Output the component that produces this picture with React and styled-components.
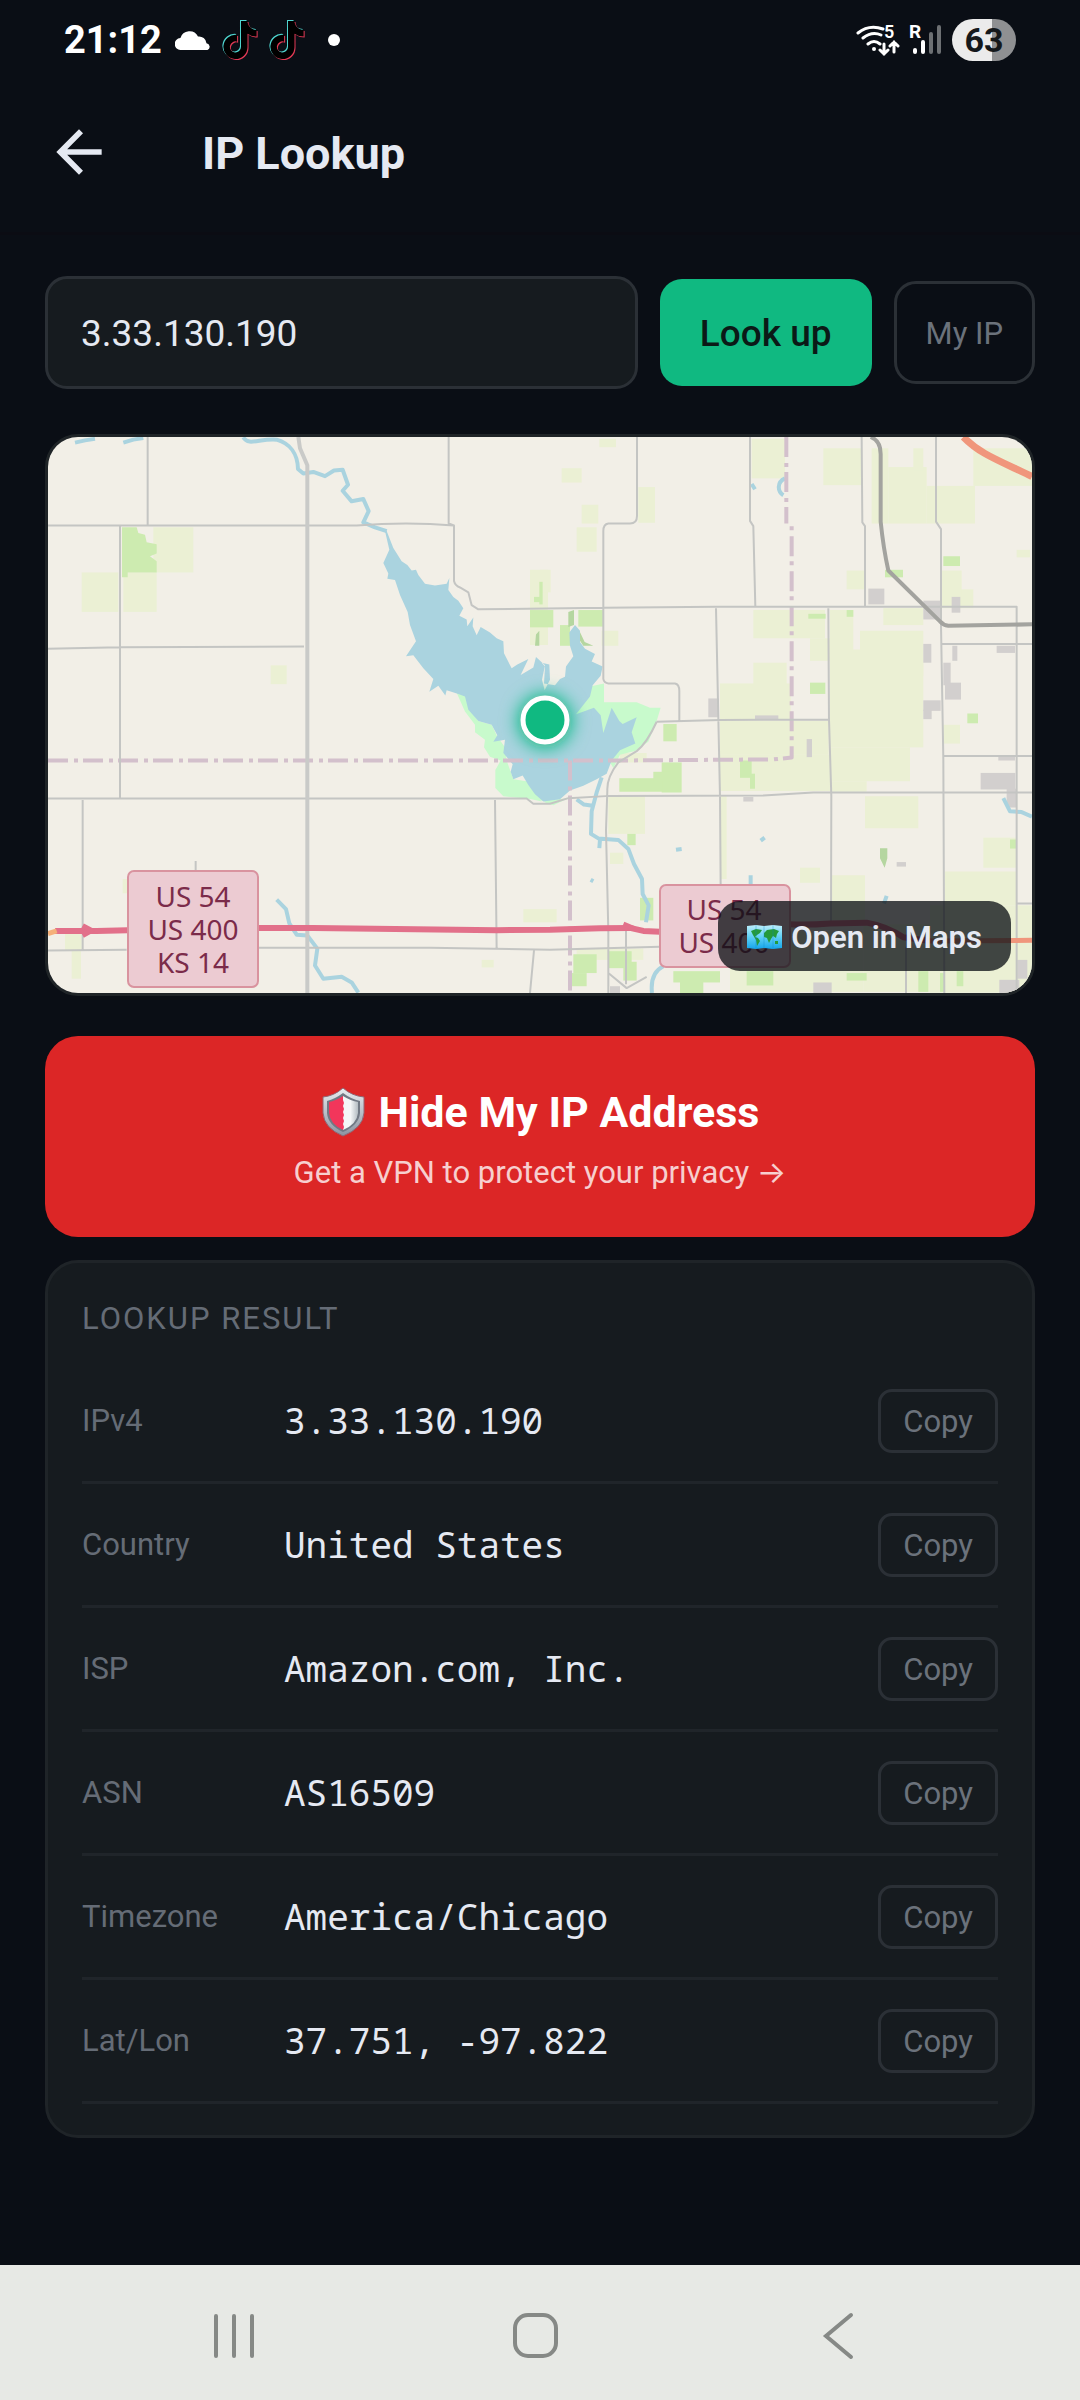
import React, { useState } from 'react';
import styled, { createGlobalStyle } from 'styled-components';
import { FaTiktok } from 'react-icons/fa6';


/* START: CSS in JS */

const GlobalStyle = createGlobalStyle`
    * {
        box-sizing: border-box;
    }
    body {
        margin: 0;
        background: #0a0e15;
        color: #e5e9f2;
        font-family: Roboto, 'Liberation Sans', sans-serif;
    }
    button, input {
        font-family: inherit;
    }
    button {
        cursor: pointer;
    }
`
const Page = styled.div`
    display: flex;
    flex-direction: column;
    min-height: 100vh;
`
const StatusBar = styled.div`
    display: flex;
    align-items: center;
    justify-content: space-between;
    height: 72px;
    padding: 8px 64px 0;
    color: white;
`
const StatusGroup = styled.div`
    display: flex;
    align-items: center;
    gap: ${props => props.$gap}px;
`
const Clock = styled.span`
    font-size: 38px;
    font-weight: 700;
    margin-right: 2px;
`
const Dot = styled.span`
    width: 12px;
    height: 12px;
    margin-left: 12px;
    border-radius: 50%;
    background: white;
`
const Battery = styled.span`
    width: 64px;
    height: 42px;
    margin-left: 4px;
    border-radius: 21px;
    background: linear-gradient(to right, #ebebeb ${props => props.$level}%, #8f9092 ${props => props.$level}%);
    color: #14181b;
    font-size: 34px;
    font-weight: 700;
    line-height: 42px;
    text-align: center;
`
const Header = styled.header`
    display: flex;
    align-items: center;
    gap: 89px;
    height: 163px;
    padding: 0 45px;
    border-bottom: 3px solid #0b0c13;
    h1 {
        margin: 0;
        padding-top: 2px;
        font-size: 45px;
        font-weight: 700;
    }
`
const BackButton = styled.button`
    display: flex;
    padding: 0;
    border: 0;
    background: transparent;
    color: inherit;
`
const Main = styled.main`
    display: flex;
    flex-direction: column;
    flex: 1;
    padding: 41px 45px;
`
const SearchForm = styled.form`
    display: flex;
    align-items: center;
    gap: 22px;
    margin-bottom: 45px;
`
const SearchInput = styled.input`
    flex: 1;
    min-width: 0;
    height: 113px;
    padding: 2px 33px 0;
    border: 3px solid #2b3036;
    border-radius: 22px;
    background: #161b1f;
    color: #e5e9f2;
    font-size: 37px;
    outline: none;
`
const LookupButton = styled.button`
    height: 107px;
    padding: 2px 40px 0;
    border: 0;
    border-radius: 22px;
    background: #10b981;
    color: #0b1a17;
    font-size: 37px;
    font-weight: 500;
`
const OutlineButton = styled.button`
    height: ${props => props.$small ? 64 : 103}px;
    padding: 2px ${props => props.$small ? 22 : 29}px 0;
    border: 3px solid #2b3036;
    border-radius: ${props => props.$small ? 14 : 22}px;
    background: transparent;
    color: #6b727b;
    font-size: 31px;
`
const MapCard = styled.section`
    position: relative;
    margin-bottom: 40px;
    border: 3px solid #1f2427;
    border-radius: 33px;
    overflow: hidden;
    & > svg {
        display: block;
        width: 100%;
        height: auto;
    }
    path.line {
        fill: none;
        vector-effect: non-scaling-stroke;
        stroke-linejoin: round;
    }
    text {
        font-family: 'Noto Sans', sans-serif;
        font-size: 28px;
        text-anchor: middle;
        fill: #7b2b4a;
    }
`
const MapLink = styled.a`
    position: absolute;
    right: 21px;
    bottom: 22px;
    display: flex;
    align-items: center;
    gap: 9px;
    height: 70px;
    padding: 2px 29px 0;
    border-radius: 22px;
    background: rgba(10, 14, 20, 0.76);
    color: #e5e9f2;
    font-size: 31px;
    font-weight: 600;
    text-decoration: none;
`
const Banner = styled.a`
    display: flex;
    flex-direction: column;
    align-items: center;
    justify-content: center;
    gap: 14px;
    min-height: 201px;
    margin-bottom: 23px;
    padding: 6px 40px 0;
    border-radius: 33px;
    background: #dc2626;
    color: white;
    text-decoration: none;
`
const BannerTitle = styled.strong`
    display: flex;
    align-items: center;
    gap: 13px;
    font-size: 43px;
    line-height: 52px;
`
const BannerText = styled.span`
    color: rgba(255, 255, 255, 0.78);
    font-size: 31px;
    line-height: 40px;
`
const Arrow = styled.span`
    font-family: Inter, sans-serif;
`
const ResultCard = styled.section`
    padding: 35px 34px 31px;
    border: 3px solid #1f2428;
    border-radius: 33px;
    background: #161b1f;
    h2 {
        margin: 0 0 20px;
        color: #656c76;
        font-size: 31px;
        font-weight: 400;
        line-height: 42px;
        letter-spacing: 2px;
        text-transform: uppercase;
    }
`
const ResultTable = styled.table`
    width: 100%;
    border-collapse: separate;
    border-spacing: 0;
    th, td {
        height: 124px;
        padding: 0;
        border-bottom: 3px solid #20252a;
        text-align: left;
    }
    th {
        width: 202px;
        color: #656c76;
        font-size: 31px;
        font-weight: 400;
    }
    td {
        font-family: 'Noto Sans Mono', 'DejaVu Sans Mono', monospace;
        font-size: 36px;
    }
    td:last-child {
        font-family: inherit;
        text-align: right;
    }
`
const NavBar = styled.nav`
    display: flex;
    align-items: center;
    justify-content: center;
    gap: 182px;
    height: 135px;
    padding: 7px 9px 0 0;
    background: #e7e9e5;
`
const NavButton = styled.button`
    display: flex;
    justify-content: center;
    width: 120px;
    padding: 0;
    border: 0;
    background: transparent;
    svg {
        fill: none;
        stroke: #868986;
        stroke-width: 4;
        stroke-linecap: round;
    }
`

/* END: CSS in JS */


const rows = [
    { label: 'IPv4', value: '3.33.130.190' },
    { label: 'Country', value: 'United States' },
    { label: 'ISP', value: 'Amazon.com, Inc.' },
    { label: 'ASN', value: 'AS16509' },
    { label: 'Timezone', value: 'America/Chicago' },
    { label: 'Lat/Lon', value: '37.751, -97.822' },
]

// [x, y, width, height] of the land use patches
const fields = [
    [370, 285, 120, 120], [155, 405, 110, 105], [280, 405, 100, 105], [722, 652, 48, 50],
    [105, 1365, 50, 45], [125, 1410, 28, 75], [278, 1220, 20, 38], [1480, 1300, 100, 35],
    [1355, 1435, 36, 20], [1500, 398, 54, 200], [1708, 50, 50, 22], [1595, 128, 60, 38],
    [1825, 178, 50, 95], [1655, 225, 50, 50], [1640, 285, 60, 65], [2165, 50, 100, 105],
    [2380, 75, 115, 98], [2525, 75, 50, 200], [2575, 125, 115, 150], [2650, 75, 30, 60],
    [2690, 175, 145, 100], [2830, 75, 176, 100], [2450, 400, 54, 50], [2170, 505, 215, 75],
    [2170, 645, 100, 60], [2070, 700, 212, 98], [2070, 800, 326, 90], [2070, 890, 330, 96],
    [2340, 580, 60, 60], [2400, 505, 70, 130], [2400, 610, 280, 260], [2490, 560, 190, 120],
    [2560, 500, 120, 45], [2400, 870, 240, 90], [2400, 960, 110, 28], [2505, 1000, 160, 85],
    [2860, 1110, 100, 80], [2745, 1200, 215, 90], [2700, 1290, 306, 232], [2405, 1210, 100, 120],
    [2310, 1190, 60, 40], [1715, 560, 50, 40], [1735, 1000, 110, 100], [1740, 1150, 40, 30],
    [2100, 1360, 400, 160], [2500, 1340, 200, 180], [2740, 810, 50, 50], [2960, 345, 40, 20],
    [2780, 450, 50, 50], [2735, 400, 60, 100], [2070, 1000, 20, 220], [1530, 398, 32, 60],
    [1770, 885, 80, 25], [1640, 1405, 200, 30],
]
const woods = [
    [1500, 505, 70, 46], [1645, 505, 75, 44], [1590, 545, 30, 55], [1512, 470, 24, 14],
    [1900, 808, 40, 46], [1895, 910, 60, 80], [1768, 952, 130, 36], [1870, 935, 50, 25],
    [2130, 905, 35, 46], [2160, 940, 15, 40], [2335, 515, 52, 13], [2340, 698, 46, 30],
    [2740, 362, 50, 26], [2565, 398, 54, 20], [2812, 780, 32, 26], [1792, 1100, 25, 30],
    [1630, 1420, 70, 50], [1620, 1470, 50, 35], [1735, 1412, 70, 45], [1780, 1440, 40, 50],
    [1930, 1465, 140, 30], [1950, 1490, 70, 33], [2150, 1465, 80, 38], [1830, 1270, 40, 60],
    [2450, 505, 20, 18], [2665, 1465, 30, 55], [2780, 1465, 20, 40], [2450, 1470, 60, 20],
    [2940, 1115, 20, 24], [1528, 430, 10, 60], [2730, 1470, 14, 50],
]
const towns = [
    [2515, 448, 48, 42], [2680, 480, 55, 50], [2765, 470, 26, 42], [2680, 595, 24, 50],
    [2767, 600, 15, 40], [2900, 600, 55, 19], [2740, 645, 22, 60], [2745, 698, 48, 45],
    [2680, 745, 52, 28], [2680, 770, 25, 25], [2035, 740, 32, 50], [2330, 848, 16, 48],
    [2852, 938, 104, 44], [2930, 980, 28, 50], [2350, 1495, 55, 28], [2908, 1488, 60, 35],
    [2962, 1435, 30, 50], [2600, 1175, 28, 12], [2140, 1002, 30, 12], [2175, 785, 70, 10],
    [1740, 1505, 30, 18], [2905, 895, 50, 10],
]

const lake = 'M1070 295L1090 340 1115 375 1132 385 1145 400 1158 398 1165 412 1185 435 1215 440 1250 435 1258 420 1255 452 1270 470 1285 480 1300 500 1288 520 1310 530 1312 548 1330 525 1328 548 1340 572 1352 550 1380 565 1400 580 1420 588 1422 620 1445 660 1462 650 1495 635 1472 678 1510 658 1518 630 1545 652 1536 690 1544 718 1560 690 1558 650 1535 645 1545 655 1542 700 1575 705 1590 688 1605 682 1608 655 1630 628 1620 600 1618 565 1635 545 1650 560 1650 590 1665 608 1695 622 1685 642 1718 655 1712 680 1688 705 1680 735 1638 782 1692 765 1712 785 1720 832 1745 765 1768 800 1778 808 1820 790 1805 830 1816 860 1770 878 1745 905 1730 940 1700 955 1660 972 1620 985 1590 1008 1540 1014 1515 995 1495 970 1478 945 1450 955 1442 935 1448 915 1420 885 1425 850 1390 855 1402 838 1385 810 1345 800 1315 770 1305 735 1285 728 1250 718 1246 732 1225 706 1198 722 1210 688 1180 660 1150 625 1128 628 1158 588 1140 545 1133 510 1110 465 1095 425 1072 422 1075 408 1060 380 1078 345 1065 295Z'
const park = 'M1280 725L1305 730 1320 770 1345 800 1385 810 1402 842 1425 870 1430 905 1450 955 1490 960 1545 1016 1505 1008 1420 1000 1396 978 1396 930 1412 905 1380 895 1362 870 1365 850 1335 830 1335 810 1305 775ZM1680 708L1722 700 1722 750 1820 750 1860 765 1892 765 1880 800 1855 855 1815 880 1770 890 1750 925 1700 850 1630 790ZM1530 1012L1570 1024 1615 1005Z'
const rivers = 'M135 60L165 54 195 50M280 60L310 52 340 48M640 46C655 70 690 48 740 52 780 62 803 90 804 130L820 142 850 138 885 149 912 134 938 132 954 172 938 188 965 216 1000 210 1016 242 1000 272 1035 285 1070 295M1715 950L1700 990 1685 1040 1683 1100 1705 1112 1765 1116 1795 1140 1812 1180 1836 1220 1838 1260 1856 1290 1848 1335M1640 1008L1662 1022 1688 1025M1710 1115L1708 1138M1900 1452C1870 1465 1862 1490 1866 1523M740 1275L768 1300 778 1338 800 1368 832 1370 862 1405 855 1450 880 1485 935 1480 965 1495 985 1522M2920 1005L2940 1040 2975 1042 3006 1054M2265 155C2240 165 2242 190 2260 200M2165 170L2175 184M1938 1142L1955 1140M2192 1118L2204 1110M2162 1210V1235M2570 1265L2562 1285M1682 1222L1690 1226'
const roads = 'M54 280H980Q1130 270 1272 280M353 45V280M270 280V1005M54 608L270 604 822 602M1256 45V275L1272 280V428Q1275 440 1290 445L1315 458 1325 492 1345 503 1720 499 2060 496H2960V1523M54 1006H1490L1510 1020H1560L1615 1005 1740 999 2200 998 2350 990H3006M158 1010V1408M54 1410L290 1408M686 1403H1200L1560 1408 1890 1400M1395 1010L1400 1408M1512 1410L1500 1523M497 1172V1197M1821 45V255Q1821 275 1800 275H1735Q1720 277 1720 295V688Q1722 699 1735 700H1935Q1948 702 1948 720V800M2160 45V268L2170 282 2176 496M2495 45L2497 272 2505 282V496M2718 45V270L2733 290V545L2740 900 2743 1523M2058 500L2070 1000 2072 1240M2395 500L2397 795 2404 1000 2403 1335M1880 802L2070 797 2397 796M1880 802Q1850 860 1820 880L1765 910Q1730 950 1732 985L1728 1090 1735 1360V1523M2733 595H3006M2740 893H3006M1788 1350V1500M2960 1285H3006M2628 1400V1523M1735 1470L1790 1510 1850 1480'
const railway = 'M2522 45Q2552 55 2552 90V270Q2560 340 2575 400L2730 535Q2740 545 2755 547L3006 543'
const highway = 'M75 1358H200L292 1356M686 1350H850L1400 1356 1560 1355 1710 1351 1800 1350 1840 1358 1890 1360M2278 1340Q2330 1343 2400 1338L2510 1336Q2570 1345 2620 1375L2700 1385'
const borders = 'M54 905H1765L2230 902 2285 897V280M2269 45V275M1620 905V1523'

const Patches = ({ list, fill }) => (
    <g fill={fill}>
        {list.map(([x, y, width, height]) => (
            <rect key={`${x}-${y}`} x={x} y={y} width={width} height={height} />
        ))}
    </g>
)

const MapDrawing = () => (
    <svg viewBox="0 0 984 556" role="img" aria-label="Map of the location">
        <defs>
            <filter id="glow" x="-100%" y="-100%" width="300%" height="300%">
                <feGaussianBlur stdDeviation="9" />
            </filter>
        </defs>
        <rect width="984" height="556" fill="#f2efe7" />
        <g transform="scale(0.33333 0.37618) translate(-54 -45)">
            <Patches list={fields} fill="#ebf0d4" />
            <Patches list={woods} fill="#cdebb0" />
            <Patches list={towns} fill="#d2cfce" />
            <path d="M276 285H320L325 300 345 305 350 325 380 330V355L360 362 380 375V405H293V418H276Z" fill="#cdebb0" />
            <path d="M1518 570L1528 560V600H1515ZM2550 1138H2572V1165L2564 1190 2550 1165ZM1615 510L1632 505V545L1615 550ZM1648 560L1664 590 1690 600H1660L1645 580Z" fill="#b5d6a0" />
            <path d={park} fill="#c8facc" />
            <path d={lake} fill="#aad3df" />
            <path className="line" d={rivers} stroke="#aad3df" strokeWidth="4" />
            <path className="line" d={borders} stroke="#d3c0cc" strokeWidth="4" strokeDasharray="20 6 4 5" />
            <path className="line" d={roads} stroke="#c4c5c3" strokeWidth="2" />
            <path className="line" d="M805 45L810 75 832 120V1523" stroke="#c9cac8" strokeWidth="4" />
            <path className="line" d={railway} stroke="#a3a39f" strokeWidth="4" />
            <path className="line" d={highway} stroke="#e2708a" strokeWidth="6" />
            <path className="line" d="M54 1365L80 1358" stroke="#f5b07a" strokeWidth="5" />
            <path className="line" d="M158 1344L185 1357 158 1370M1780 1340L1812 1352" stroke="#e2708a" strokeWidth="5" />
            <path className="line" d="M2800 45C2850 90 2900 105 3006 150" stroke="#f0967c" strokeWidth="7" />
            <path className="line" d="M2700 1385L3006 1383" stroke="#f0967c" strokeWidth="5" />
        </g>
        <g fill="#eccbd2" stroke="#d9939f" strokeWidth="2">
            <rect x="80" y="434" width="130" height="116" rx="6" />
            <rect x="612" y="448" width="130" height="82" rx="6" />
        </g>
        <text x="145" y="470">US 54</text>
        <text x="145" y="503">US 400</text>
        <text x="145" y="536">KS 14</text>
        <text x="676" y="483">US 54</text>
        <text x="676" y="516">US 400</text>
        <circle cx="497" cy="284" r="27" fill="#10b981" filter="url(#glow)" />
        <circle cx="497" cy="283" r="22" fill="#10b981" stroke="#fff" strokeWidth="5" />
    </svg>
)

const Cloud = () => (
    <svg width="36" height="20" viewBox="0 0 36 20" fill="#fff">
        <path d="M6 20a6 6 0 0 1-.6-12A9.500 9.500 0 0 1 23 6.500a7.500 7.500 0 0 1 8.500 6.800A3.500 3.500 0 0 1 32.500 20Z" />
    </svg>
)

const TikTok = () => (
    <svg width="36" height="40" viewBox="0 0 36 40">
        <FaTiktok x="-2" y="0" size="38" color="#4fd5d0" />
        <FaTiktok x="0" y="2" size="38" color="#e33a56" />
        <FaTiktok x="-1" y="1" size="38" color="#000" />
    </svg>
)

const Wifi = () => (
    <svg width="44" height="44" viewBox="857 20 44 44" fill="none" stroke="#fff" strokeWidth="3" strokeLinecap="round">
        <path d="M859 35Q870 26 884 31M864 40Q873 33 882 37M869 46Q875 41 881 46" />
        <circle cx="875" cy="51" r="2" fill="#fff" stroke="none" />
        <path d="M885 46V56M881 52L885 56 889 52M895 54V44M891 48L895 44 899 48" />
        <text x="885" y="40" fill="#fff" stroke="none" fontSize="18" fontWeight="600">5</text>
    </svg>
)

const Signal = () => (
    <svg width="34" height="44" viewBox="904 19 34 44" fill="none" stroke="#fff" strokeWidth="4" strokeLinecap="round">
        <path d="M912 51V53M920 43V53" />
        <path d="M928 35V53M936 28V53" stroke="#6d7073" />
        <text x="906" y="39" fill="#fff" stroke="none" fontSize="19" fontWeight="700">R</text>
    </svg>
)

const ShieldIcon = () => (
    <svg width="45" height="50" viewBox="0 0 45 50">
        <defs>
            <linearGradient id="rim" x1="0" y1="0" x2="0" y2="1">
                <stop offset="0" stopColor="#e9edf0" />
                <stop offset="1" stopColor="#8b93a0" />
            </linearGradient>
            <linearGradient id="steel">
                <stop offset="0.5" stopColor="#f4f6f7" />
                <stop offset="1" stopColor="#b3bcc2" />
            </linearGradient>
        </defs>
        <path d="M22 1Q31 9 43 10V26Q42 41 22 49 3 41 2 26V10Q13 9 22 1Z" fill="url(#rim)" stroke="#8f6673" />
        <path d="M22 6Q30 12 39 14V26Q38 38 22 45 7 38 6 26V14Q14 12 22 6Z" fill="#717984" />
        <path d="M22 9Q30 14 37 15V26Q36 37 22 43Z" fill="url(#steel)" />
        <path d="M22 9Q14 14 8 15V26Q9 37 22 43L23 40 22 37 23 34 22 31 23 28 22 25 23 22 22 19 23 16 22 13Z" fill="#f2365b" />
    </svg>
)

const WorldMapIcon = () => (
    <svg width="35" height="24" viewBox="0 0 35 24">
        <defs>
            <linearGradient id="sea" x1="0" y1="0" x2="0" y2="1">
                <stop offset="0" stopColor="#bdeefa" />
                <stop offset="0.5" stopColor="#5fd0f5" />
                <stop offset="1" stopColor="#15a5ea" />
            </linearGradient>
        </defs>
        <path d="M0 1L9 0 17 1 26 0 35 1V23L26 24 17 23 9 24 0 23Z" fill="url(#sea)" />
        <path d="M4 6L9 4 15 5 13 8 10 10 8 12 11 13 13 16 10 21 9 15 6 10ZM17 8L20 5 27 4 32 6 30 9 29 13 26 11 24 14 22 18 20 13 17 12ZM28 16L31 16 31 19 28 19Z" fill="#259a3c" />
        <path d="M9 0V24M17 1V23M26 0V24" stroke="#0c87c4" strokeOpacity="0.35" />
    </svg>
)

export default function App() {
    const [ip, setIp] = useState('3.33.130.190')

    const copy = (value) => {
        if (navigator.clipboard) navigator.clipboard.writeText(value)
    }

    return (
        <Page>
            <GlobalStyle />
            <StatusBar>
                <StatusGroup $gap={11}>
                    <Clock>21:12</Clock>
                    <Cloud />
                    <TikTok />
                    <TikTok />
                    <Dot />
                </StatusGroup>
                <StatusGroup $gap={7}>
                    <Wifi />
                    <Signal />
                    <Battery $level={62}>63</Battery>
                </StatusGroup>
            </StatusBar>

            <Header>
                <BackButton aria-label="Back">
                    <svg width="68" height="68" viewBox="0 0 24 24" fill="currentColor">
                        <path d="M20 11H7.830l5.590-5.590L12 4l-8 8 8 8 1.410-1.410L7.830 13H20v-2z" />
                    </svg>
                </BackButton>
                <h1>IP Lookup</h1>
            </Header>

            <Main>
                <SearchForm onSubmit={e => e.preventDefault()}>
                    <SearchInput aria-label="IP address" value={ip} onChange={e => setIp(e.target.value)} />
                    <LookupButton type="submit">Look up</LookupButton>
                    <OutlineButton type="button">My IP</OutlineButton>
                </SearchForm>

                <MapCard>
                    <MapDrawing />
                    <MapLink href="#maps">
                        <WorldMapIcon />
                        Open in Maps
                    </MapLink>
                </MapCard>

                <Banner href="#vpn">
                    <BannerTitle>
                        <ShieldIcon />
                        Hide My IP Address
                    </BannerTitle>
                    <BannerText>Get a VPN to protect your privacy <Arrow>→</Arrow></BannerText>
                </Banner>

                <ResultCard>
                    <h2>Lookup Result</h2>
                    <ResultTable>
                        <tbody>
                            {rows.map(row => (
                                <tr key={row.label}>
                                    <th scope="row">{row.label}</th>
                                    <td>{row.value}</td>
                                    <td>
                                        <OutlineButton $small type="button" onClick={() => copy(row.value)}>Copy</OutlineButton>
                                    </td>
                                </tr>
                            ))}
                        </tbody>
                    </ResultTable>
                </ResultCard>
            </Main>

            <NavBar>
                <NavButton aria-label="Recents">
                    <svg width="46" height="50" viewBox="0 0 46 50">
                        <path d="M5 5V45M23 5V45M41 5V45" />
                    </svg>
                </NavButton>
                <NavButton aria-label="Home">
                    <svg width="50" height="50" viewBox="0 0 50 50">
                        <rect x="4" y="4" width="41" height="41" rx="13" />
                    </svg>
                </NavButton>
                <NavButton aria-label="Back">
                    <svg width="46" height="50" viewBox="0 0 46 50">
                        <path d="M36 4L11 25 36 46" />
                    </svg>
                </NavButton>
            </NavBar>
        </Page>
    )
}
